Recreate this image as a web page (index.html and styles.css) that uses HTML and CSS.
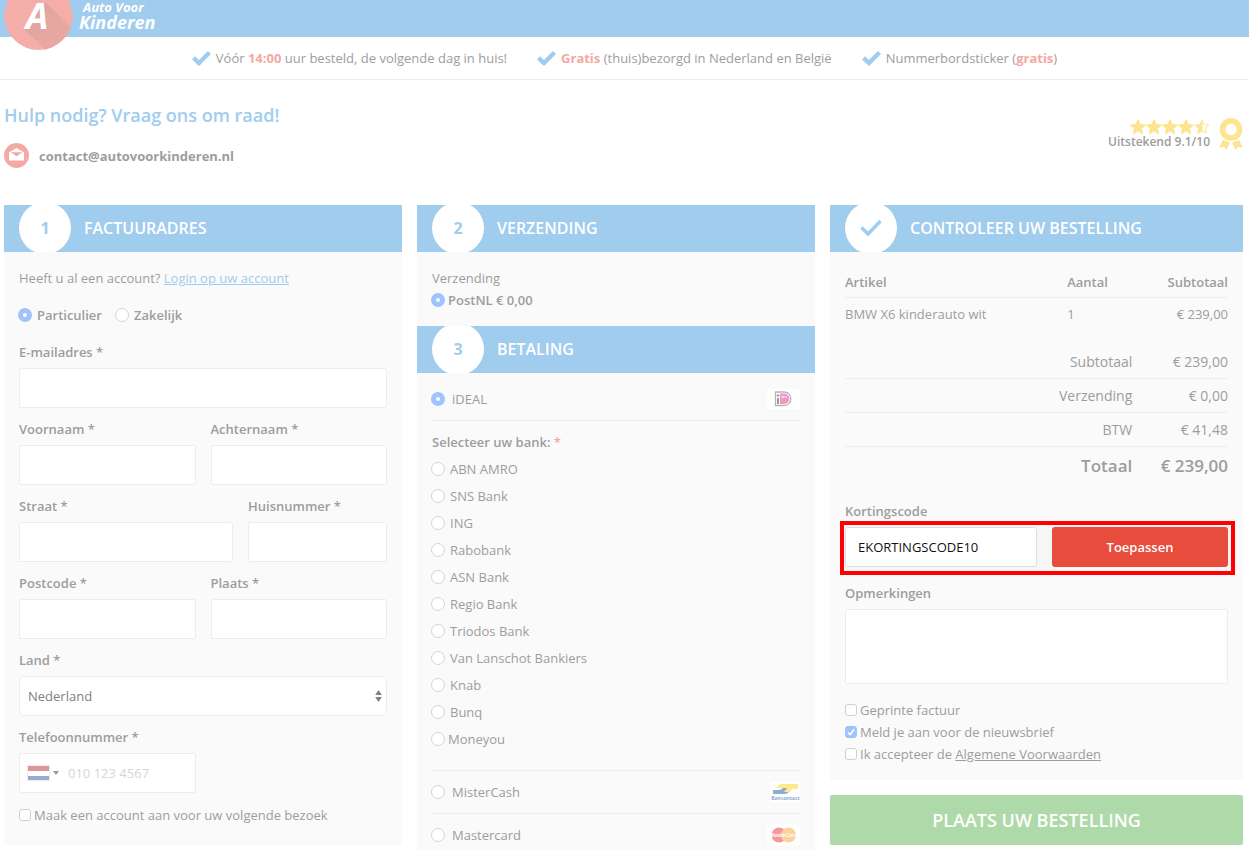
FILE: index.html
```html
<!DOCTYPE html>
<html lang="nl">
<head>
<meta charset="utf-8">
<meta name="viewport" content="width=device-width, initial-scale=1">
<title>Afrekenen - Auto Voor Kinderen</title>
<link rel="stylesheet" href="styles.css">
</head>
<body>
<svg class="defs" aria-hidden="true">
  <symbol id="check" viewBox="0 0 19 16"><path d="M1.500 7.800 7 13 17.500 2.500" fill="none" stroke="currentColor" stroke-width="4.400"/></symbol>
  <symbol id="star" viewBox="0 0 16 15"><path d="M8 1l2 4.600 5 .5-3.800 3.300 1.200 4.900L8 11.700l-4.400 2.600 1.200-4.900L1 6.100l5-.5z" fill="currentColor" stroke="currentColor" stroke-width="1.400" stroke-linejoin="round"/></symbol>
</svg>
<div class="page">
  <header class="header">
    <a class="logo" href="#" aria-label="Auto Voor Kinderen">
      <svg class="logo-mark" width="70" height="50" viewBox="0 0 70 50">
        <defs><linearGradient id="shade" x1="0" y1="0" x2="1" y2="1"><stop offset="0" stop-color="#dca39e"/><stop offset="1" stop-color="#efaba4"/></linearGradient>
        <clipPath id="disc"><circle cx="34.500" cy="16" r="34"/></clipPath></defs>
        <circle cx="34.500" cy="16" r="34" fill="#f5aea7"/>
        <path clip-path="url(#disc)" d="M20 29 42 2 75 36 52 60Z" fill="url(#shade)"/>
        <text x="33" y="29" text-anchor="middle" class="logo-letter">A</text>
      </svg>
      <span class="logo-text"><span class="logo-top">Auto Voor</span><span class="logo-bottom">Kinderen</span></span>
    </a>
  </header>

  <ul class="usps">
    <li><svg class="usp-icon"><use href="#check"/></svg><span>Vóór <strong>14:00</strong> uur besteld, de volgende dag in huis!</span></li>
    <li><svg class="usp-icon"><use href="#check"/></svg><span><strong>Gratis</strong> (thuis)bezorgd in Nederland en België</span></li>
    <li><svg class="usp-icon"><use href="#check"/></svg><span>Nummerbordsticker (<strong>gratis</strong>)</span></li>
  </ul>

  <section class="help">
    <div>
      <h1 class="help-title">Hulp nodig? Vraag ons om raad!</h1>
      <a class="mail" href="mailto:contact@autovoorkinderen.nl">
        <svg width="25" height="25" viewBox="0 0 25 25"><circle cx="12.500" cy="12.500" r="12.500" fill="#f4a9a2"/><path d="M5 9.500 12.500 5 20 9.500V17.500H5Z" fill="#fff"/><path d="M6.500 9.200H18.500L12.500 13.200Z" fill="#f4a9a2"/></svg>
        <span>contact@autovoorkinderen.nl</span>
      </a>
    </div>
    <div class="rating">
      <div class="score">
        <div class="stars">
          <svg><use href="#star"/></svg><svg><use href="#star"/></svg><svg><use href="#star"/></svg><svg><use href="#star"/></svg><svg viewBox="0 0 16 15"><path d="M8 1l2 4.600 5 .5-3.800 3.300 1.200 4.900L8 11.700l-4.400 2.600 1.200-4.900L1 6.100l5-.5z" fill="none" stroke="currentColor" stroke-linejoin="round"/><path d="M8.500 1v11L3.600 14.300l1.200-4.900L1 6.100l5-.5z" fill="currentColor"/></svg>
        </div>
        <span>Uitstekend 9.1/10</span>
      </div>
      <svg class="medal" width="24" height="32" viewBox="0 0 24 32"><circle cx="12" cy="11.500" r="8.500" fill="none" stroke="currentColor" stroke-width="5.500"/><circle cx="12" cy="11.500" r="10.500" fill="none" stroke="currentColor" stroke-width="1.500" stroke-dasharray="3.500 2"/><path d="M4 22 11 24.500 7.500 32 5 29 0 29.500ZM20 22 13 24.500 16.500 32 19 29 24 29.500Z" fill="currentColor"/></svg>
    </div>
  </section>

  <form class="checkout">
    <section class="column">
      <div class="panel-head"><span class="step">1</span><h2>FACTUURADRES</h2></div>
      <div class="panel address">
        <p>Heeft u al een account? <a class="login" href="#">Login op uw account</a></p>
        <div class="kinds">
          <label class="choice strong"><input type="radio" name="kind" checked>Particulier</label>
          <label class="choice strong"><input type="radio" name="kind">Zakelijk</label>
        </div>
        <div class="fields">
          <div class="field"><label for="email">E-mailadres *</label><input class="input" id="email" type="email"></div>
          <div class="pair">
            <div class="field"><label for="first">Voornaam *</label><input class="input" id="first" type="text"></div>
            <div class="field"><label for="last">Achternaam *</label><input class="input" id="last" type="text"></div>
          </div>
          <div class="pair street">
            <div class="field"><label for="street">Straat *</label><input class="input" id="street" type="text"></div>
            <div class="field"><label for="number">Huisnummer *</label><input class="input" id="number" type="text"></div>
          </div>
          <div class="pair">
            <div class="field"><label for="zip">Postcode *</label><input class="input" id="zip" type="text"></div>
            <div class="field"><label for="city">Plaats *</label><input class="input" id="city" type="text"></div>
          </div>
          <div class="field"><label for="country">Land *</label>
            <div class="select-wrap"><select class="input select" id="country"><option>Nederland</option></select><svg class="arrows" viewBox="0 0 7 12"><path d="M3.500 0 6.800 5H.2ZM3.500 12 .2 7H6.800Z" fill="#808080"/></svg></div>
          </div>
          <div class="pair">
            <div class="field"><label for="phone">Telefoonnummer *</label>
              <div class="input phone">
                <button class="flag-button" type="button" aria-label="Nederland"><span class="flag"></span><span class="caret"></span></button>
                <input id="phone" type="tel" placeholder="010 123 4567">
              </div>
            </div>
          </div>
        </div>
        <label class="choice tick"><input type="checkbox">Maak een account aan voor uw volgende bezoek</label>
      </div>
    </section>

    <section class="column">
      <div class="panel-head"><span class="step">2</span><h2>VERZENDING</h2></div>
      <div class="panel shipping">
        <p>Verzending</p>
        <label class="choice tick strong"><input type="radio" name="ship" checked>PostNL € 0,00</label>
      </div>
      <div class="panel-head"><span class="step">3</span><h2>BETALING</h2></div>
      <div class="panel payment">
        <div class="method">
          <label class="choice wide"><input type="radio" name="pay" checked>iDEAL</label>
          <svg width="33" height="20" viewBox="0 0 33 20"><path d="M0 0H33V20H0Z" fill="#fff"/><path d="M8.500 3H17C26 3 26 16.500 17 16.500H8.500Z" fill="#fff" stroke="#b4b4b4" stroke-width="1.300"/><path d="M13 4.500H17C24 4.500 24 15 17 15H13Z" fill="#f097c8"/><path d="M14 8H20M16 6.800V9" stroke="#fff" stroke-width=".7"/><circle cx="11" cy="6.500" r="1.200" fill="#999"/><path d="M10 9H12V15H10Z" fill="#999"/></svg>
        </div>
        <fieldset class="banks">
          <legend>Selecteer uw bank: <span class="required">*</span></legend>
          <label class="choice"><input type="radio" name="bank">ABN AMRO</label>
          <label class="choice"><input type="radio" name="bank">SNS Bank</label>
          <label class="choice"><input type="radio" name="bank">ING</label>
          <label class="choice"><input type="radio" name="bank">Rabobank</label>
          <label class="choice"><input type="radio" name="bank">ASN Bank</label>
          <label class="choice"><input type="radio" name="bank">Regio Bank</label>
          <label class="choice"><input type="radio" name="bank">Triodos Bank</label>
          <label class="choice"><input type="radio" name="bank">Van Lanschot Bankiers</label>
          <label class="choice"><input type="radio" name="bank">Knab</label>
          <label class="choice"><input type="radio" name="bank">Bunq</label>
          <label class="choice tick"><input type="radio" name="bank">Moneyou</label>
        </fieldset>
        <div class="method">
          <label class="choice wide"><input type="radio" name="pay">MisterCash</label>
          <svg width="29" height="20" viewBox="0 0 29 20"><path d="M0 0H29V20H0Z" fill="#fff"/><path d="M2 8H8C11 8 12 5 14 5H22L18 10C16 12 14 12 12 12H2Z" fill="#8aadd0"/><path d="M9 2H27V7H21L18 10H13L16 6H5Z" fill="#ffe98a"/><text x="14.500" y="18" text-anchor="middle" class="card-name blue">Bancontact</text></svg>
        </div>
        <div class="method">
          <label class="choice wide"><input type="radio" name="pay">Mastercard</label>
          <svg width="33" height="20" viewBox="0 0 33 20"><path d="M0 0H33V20H0Z" fill="#fff"/><circle cx="12" cy="10" r="7.500" fill="#f5989c"/><circle cx="21.500" cy="10" r="7.500" fill="#fdd19a"/><text x="16.500" y="12" text-anchor="middle" class="card-name white">MasterCard</text></svg>
        </div>
      </div>
    </section>

    <section class="column">
      <div class="panel-head"><span class="step"><svg class="step-check" viewBox="0 0 24 20"><path d="M2.500 9.500 9 16 21.500 3" fill="none" stroke="currentColor" stroke-width="3.400"/></svg></span><h2>CONTROLEER UW BESTELLING</h2></div>
      <div class="panel order">
        <table class="items">
          <thead><tr><th class="item-name">Artikel</th><th>Aantal</th><th class="amount">Subtotaal</th></tr></thead>
          <tbody><tr><td>BMW X6 kinderauto wit</td><td>1</td><td class="amount">€ 239,00</td></tr></tbody>
        </table>
        <table class="totals">
          <tbody>
            <tr><th>Subtotaal</th><td>€ 239,00</td></tr>
            <tr><th>Verzending</th><td>€ 0,00</td></tr>
            <tr><th>BTW</th><td>€ 41,48</td></tr>
            <tr class="grand"><th>Totaal</th><td>€ 239,00</td></tr>
          </tbody>
        </table>
        <div class="field"><label for="coupon">Kortingscode</label>
          <div class="coupon"><input class="input" id="coupon" type="text" value="EKORTINGSCODE10"><button class="apply" type="button">Toepassen</button></div>
        </div>
        <div class="field"><label for="notes">Opmerkingen</label><textarea class="input notes" id="notes"></textarea></div>
        <div class="agreements">
          <label class="choice tick"><input type="checkbox">Geprinte factuur</label>
          <label class="choice tick"><input type="checkbox" checked>Meld je aan voor de nieuwsbrief</label>
          <label class="choice tick"><input type="checkbox"><span>Ik accepteer de <a href="#">Algemene Voorwaarden</a></span></label>
        </div>
      </div>
      <button class="submit" type="submit">PLAATS UW BESTELLING</button>
    </section>
  </form>
</div>
</body>
</html>
```
FILE: styles.css
```css
* { box-sizing: border-box; }
body {
  margin: 0;
  background: #fff;
  color: #9d9d9d;
  font: 13px/22px "Open Sans", "Noto Sans", sans-serif;
}
h1, h2, p, ul { margin: 0; padding: 0; }
a { color: inherit; }
svg { display: block; flex: none; }
input, select, textarea, button { font: inherit; color: inherit; margin: 0; }
.defs { position: absolute; width: 0; height: 0; }
.page { height: 100vh; overflow: hidden; }

.header { height: 37px; padding-left: 4px; background: #a0ccee; }
.logo { display: inline-flex; align-items: flex-start; gap: 5px; color: #fff; text-decoration: none; }
.logo-letter { font: italic 700 36px "Open Sans", sans-serif; fill: #fff; }
.logo-text { display: flex; flex-direction: column; font-weight: 700; font-style: italic; }
.logo-top { font-size: 13px; line-height: 15px; padding-left: 4px; }
.logo-bottom { font-size: 18px; line-height: 15px; }

.usps {
  display: flex; justify-content: center; gap: 30px;
  padding: 10px 0; border-bottom: 1px solid #ededed; list-style: none;
}
.usps li { display: flex; align-items: center; gap: 5px; }
.usps strong { color: #f5a8a2; }
.usp-icon { width: 19px; height: 16px; color: #a0ccee; }

.help { display: flex; align-items: center; justify-content: space-between; padding: 23px 6px 37px 4px; }
.help-title { color: #a0ccee; font-size: 18px; line-height: 24px; font-weight: 600; margin-bottom: 16px; }
.mail { display: flex; align-items: center; gap: 10px; font-weight: 700; text-decoration: none; }
.rating { display: flex; align-items: center; gap: 9px; padding-bottom: 3px; }
.score { display: flex; flex-direction: column; align-items: flex-end; font-size: 12px; line-height: 15px; font-weight: 600; }
.stars { display: flex; color: #fde491; }
.stars svg { width: 16px; height: 15px; }
.medal { color: #fde491; }

.checkout { display: grid; grid-template-columns: 398fr 398fr 413fr; gap: 15px; padding: 0 6px 0 4px; }
.column { min-width: 0; }
.panel-head { display: flex; align-items: center; gap: 13px; height: 47px; padding: 0 15px 2px; background: #a0ccee; color: #fff; overflow: hidden; }
.panel-head h2 { font-size: 16px; font-weight: 600; }
.step { display: flex; flex: none; align-items: center; justify-content: center; width: 52px; height: 52px; border-radius: 50%; background: #fff; color: #a0ccee; font-size: 16px; font-weight: 700; }
.step-check { width: 24px; height: 20px; }
.panel { background: #fafafa; padding: 15px; }
.address { padding-bottom: 19px; }
.login { color: #a0ccee; }

.choice { display: flex; align-items: center; gap: 5px; }
.choice.tick { gap: 3px; }
.choice.wide { gap: 7px; }
.strong { font-weight: 600; }
input[type="radio"] { appearance: none; flex: none; width: 14px; height: 14px; margin-left: -1px; border: 1px solid #d4d4d4; border-radius: 50%; background: #fff; }
input[type="radio"]:checked { border: 5px solid #9fc3ff; }
input[type="checkbox"] { appearance: none; flex: none; width: 12px; height: 12px; border: 1px solid #cfcfcf; border-radius: 3px; background: #fff; }
input[type="checkbox"]:checked {
  border-color: #9fc3ff;
  background: #9fc3ff url("data:image/svg+xml,%3Csvg xmlns='http://www.w3.org/2000/svg' viewBox='0 0 10 10'%3E%3Cpath d='M2 5.500 4.200 7.800 8 2.200' fill='none' stroke='white' stroke-width='1.600'/%3E%3C/svg%3E") center / 10px 10px no-repeat;
}
.kinds { display: flex; gap: 14px; margin: 15px 0; }
.fields { display: flex; flex-direction: column; gap: 10px; margin-bottom: 11px; }
.pair { display: grid; grid-template-columns: minmax(0, 1fr) minmax(0, 1fr); gap: 15px; }
.pair.street { grid-template-columns: 214fr 139fr; }
.field > label { display: block; font-weight: 600; margin-bottom: 5px; }
.input { display: block; width: 100%; height: 40px; padding: 0 12px; border: 1px solid #ededed; border-radius: 2px; background: #fff; outline: 0; }
.select-wrap { position: relative; }
.select { appearance: none; padding: 0 8px; border-radius: 5px; color: #808080; }
.arrows { position: absolute; right: 5px; top: 14px; width: 7px; height: 12px; pointer-events: none; }
.phone { display: flex; align-items: center; gap: 9px; padding: 0 8px; }
.phone input { flex: 1; min-width: 0; padding: 0; border: 0; outline: 0; background: none; }
.phone input::placeholder { color: #d6d6d6; opacity: 1; }
.flag-button { display: flex; align-items: center; gap: 4px; padding: 0; border: 0; background: none; }
.flag { width: 21px; height: 14px; background: linear-gradient(#dc9498 0 5px, #fff 5px 10px, #9aa9cd 10px); box-shadow: 0 0 1px 1px #eee; }
.caret { border: 3px solid transparent; border-top: 4px solid #999; border-bottom: 0; }

.payment { padding-top: 5px; padding-bottom: 0; }
.method { display: flex; align-items: center; justify-content: space-between; height: 43px; border-bottom: 1px solid #ededed; }
.banks { margin: 0; padding: 10px 0 18px; border: 0; border-bottom: 1px solid #ededed; }
.banks legend { float: left; width: 100%; padding: 0; margin-bottom: 2px; font-weight: 600; }
.banks .choice { clear: both; height: 27px; }
.required { color: #f5a8a2; }
.card-name { font: 700 5px "Open Sans", sans-serif; }
.card-name.blue { fill: #8aadd0; }
.card-name.white { fill: #fff; font-style: italic; }

table { width: 100%; border-collapse: separate; border-spacing: 0; table-layout: fixed; }
th, td { padding: 0; text-align: left; }
.items th { height: 31px; font-weight: 600; border-bottom: 1px solid #ededed; }
.items td { height: 32px; }
.item-name { width: 58%; }
.items .amount { text-align: right; }
.totals { margin: 15px 0; font-size: 14px; }
.totals th, .totals td { height: 34px; font-weight: 400; text-align: right; border-bottom: 1px solid #ededed; }
.totals th { width: 75%; }
.totals .grand th, .totals .grand td { height: 38px; font-size: 17px; font-weight: 600; border: 0; }
.order .field { margin-bottom: 15px; }
.coupon { position: relative; z-index: 0; display: grid; grid-template-columns: 192fr 176fr; gap: 15px; }
.coupon::before { content: ""; position: absolute; z-index: -1; inset: -6px -7px -8px -5px; border: 4px solid #f00; background: #f6f6f6; }
.coupon .input { border-color: #ddd; color: #111; border-radius: 3px; }
.apply { height: 40px; border: 0; border-radius: 3px; background: #e84c3d; color: #fff; font-weight: 600; }
.input.notes { height: 75px; resize: none; }
.submit { display: block; width: 100%; height: 50px; margin-top: 15px; border: 0; border-radius: 2px; background: #aed9a8; color: #fff; font-size: 18px; font-weight: 600; }
```
